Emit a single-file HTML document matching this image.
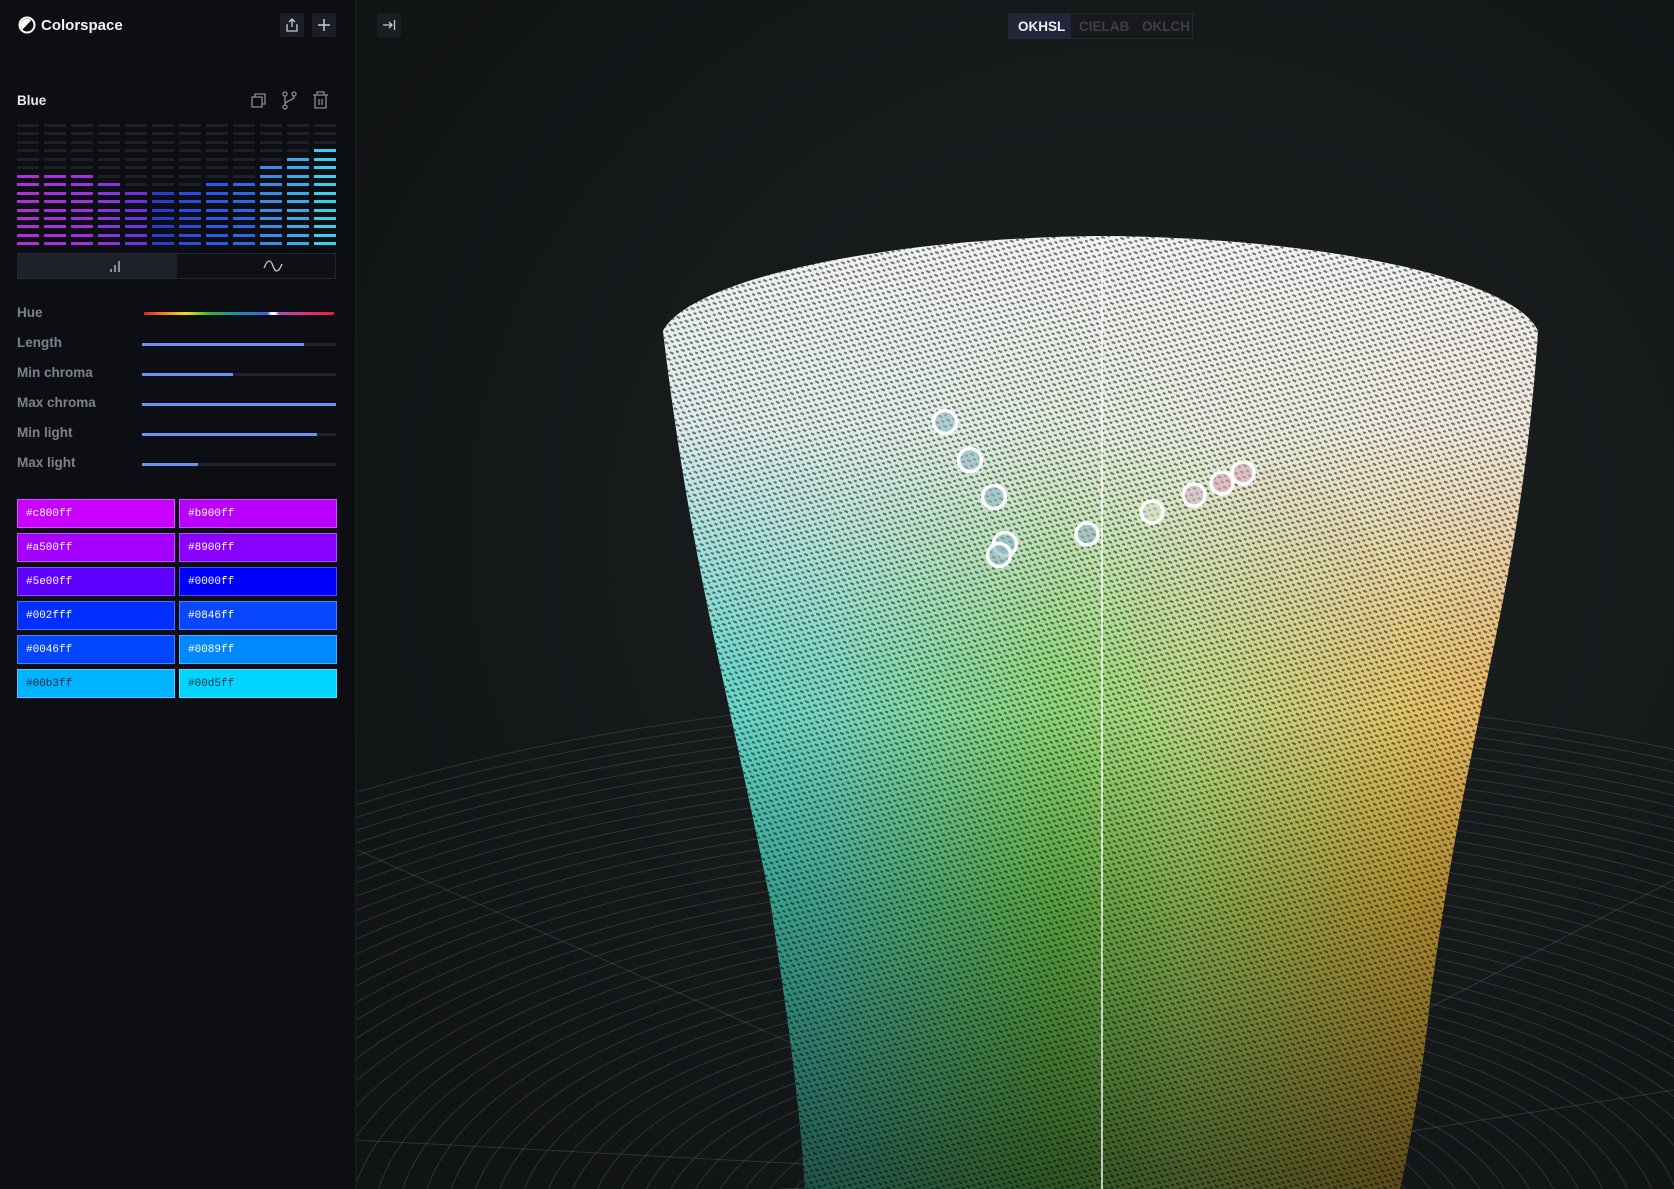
<!DOCTYPE html>
<html><head><meta charset="utf-8"><style>
*{box-sizing:border-box;margin:0;padding:0}
html,body{width:1674px;height:1189px;overflow:hidden}
body{background:#14181a;font-family:"Liberation Sans",sans-serif;position:relative}
#side{position:absolute;left:0;top:0;width:356px;height:1189px;background:#0c0e13;border-right:1px solid #1a1d22}
.btn{position:absolute;width:24px;height:24px;background:#1b1e26;border-radius:2px;color:#c8ccd4;display:flex;align-items:center;justify-content:center}
.lbl{position:absolute;left:17px;font-size:13.5px;color:#7d828c;font-weight:bold}
.track{position:absolute;left:142px;width:194px;height:3px;background:#1f222a}
.track i{position:absolute;left:0;top:0;height:3px;background:#6d8ff0}
.sw{position:absolute;width:158px;height:29px;border:1px solid rgba(255,255,255,.3);font-family:"Liberation Mono",monospace;font-size:11px;color:#fff;padding:8px 0 0 8px}
</style></head><body>
<svg width="1674" height="1189" style="position:absolute;left:0;top:0">
<defs>
<radialGradient id="bg" cx="0.6" cy="0.45" r="0.7"><stop offset="0" stop-color="#1c2122"/><stop offset="1" stop-color="#111415"/></radialGradient>
<linearGradient id="hz" x1="0" x2="1"><stop offset="0" stop-color="#2fd0c8"/><stop offset="0.2" stop-color="#55d0b0"/><stop offset="0.45" stop-color="#70d050"/><stop offset="0.6" stop-color="#a8d860"/><stop offset="0.85" stop-color="#e0b840"/><stop offset="1" stop-color="#e6a03a"/></linearGradient>
<linearGradient id="vt" x1="0" y1="0" x2="0" y2="1"><stop offset="0" stop-color="#f2f2f2" stop-opacity="1"/><stop offset="0.2" stop-color="#eeeeee" stop-opacity="0.9"/><stop offset="0.45" stop-color="#e8e8e8" stop-opacity="0.3"/><stop offset="0.7" stop-color="#ddd" stop-opacity="0"/></linearGradient>
<linearGradient id="dk" x1="0" y1="0" x2="0" y2="1"><stop offset="0.5" stop-color="#000" stop-opacity="0"/><stop offset="1" stop-color="#000" stop-opacity="0.6"/></linearGradient>
<pattern id="noise" width="9" height="7" patternUnits="userSpaceOnUse" patternTransform="rotate(25)">
<rect x="0" y="0" width="4" height="2" fill="#0b0d0e"/><rect x="5" y="3.5" width="3" height="2" fill="#0b0d0e"/>
</pattern>
<clipPath id="mc"><rect x="357" y="0" width="1317" height="1189"/></clipPath>
<path id="cyl" d="M663,331 C690,280 880,238 1102,236 C1330,238 1515,280 1538,331 C1520,600 1470,700 1430,1000 C1420,1100 1400,1189 1400,1189 L805,1189 C800,1100 785,1000 770,900 C730,700 690,560 663,331 Z"/>
</defs>
<rect x="357" y="0" width="1317" height="1189" fill="url(#bg)"/>
<g clip-path="url(#mc)" fill="none" stroke="#5a6062" stroke-opacity="0.4" stroke-width="1">
<g id="rings"></g>
<line x1="1100" y1="1180" x2="357" y2="1140"/><line x1="1100" y1="1180" x2="357" y2="850"/>
<line x1="1100" y1="1180" x2="1674" y2="880"/><line x1="1100" y1="1180" x2="1674" y2="1090"/>
<line x1="1100" y1="1180" x2="780" y2="1189"/>
</g>
<use href="#cyl" fill="url(#hz)"/>
<use href="#cyl" fill="url(#vt)"/>
<ellipse cx="1260" cy="620" rx="130" ry="150" fill="#e0a0a0" opacity="0.08"/>
<use href="#cyl" fill="url(#noise)" opacity="0.55"/>
<use href="#cyl" fill="url(#dk)"/>
<line x1="1102" y1="240" x2="1102" y2="1189" stroke="#fff" stroke-opacity="0.7" stroke-width="2"/>
<g fill="#8fb8c8" fill-opacity="0.6" stroke="#fff" stroke-width="3.5">
<circle cx="945" cy="422" r="11.5"/><circle cx="970" cy="460" r="11.5"/><circle cx="994" cy="497" r="11.5"/><circle cx="1005" cy="544" r="11.5"/><circle cx="999" cy="555" r="11.5"/>
<circle cx="1087" cy="534" r="11"/><circle cx="1152" cy="512" r="11" fill="#d8e0c8"/><circle cx="1194" cy="495" r="11" fill="#d8b8c8"/><circle cx="1222" cy="483" r="11" fill="#d8a8c0"/><circle cx="1243" cy="473" r="11" fill="#d8a8c0"/>
</g>
</svg>
<script>
var g=document.getElementById('rings'),s='';
for(var r=80;r<1300;r+=24){s+='<ellipse cx="1100" cy="1230" rx="'+r+'" ry="'+(r*0.42)+'"/>';}
g.innerHTML=s;
</script>
<div id="side"></div>
<div style="position:absolute;left:144px;top:312px;width:190px;height:3px;background:linear-gradient(90deg,#e02020,#f08020 10%,#f0e020 22%,#30b040 35%,#1890b0 50%,#4060e0 65%,#fff 67%,#fff 69%,#a050c0 71%,#e03080 85%,#e02030)"></div>
<svg width="18" height="18" style="position:absolute;left:18px;top:16px" viewBox="0 0 18 18"><circle cx="9" cy="9" r="7.5" fill="none" stroke="#fff" stroke-width="2"/><path d="M4.5 13.5 L13 4.5 A6 6 0 0 0 4.5 13.5Z" fill="#fff"/></svg>
<div style="position:absolute;left:41px;top:17px;font-size:15px;font-weight:bold;color:#f2f3f5">Colorspace</div>
<div class="btn" style="left:280px;top:13px"><svg width="14" height="14" viewBox="0 0 14 14" fill="none" stroke="#ccc" stroke-width="1.3"><path d="M7 1v8M4 4l3-3 3 3M3 7H2v6h10V7h-1"/></svg></div>
<div class="btn" style="left:312px;top:13px"><svg width="14" height="14" viewBox="0 0 14 14" stroke="#ccc" stroke-width="1.5"><path d="M7 1v12M1 7h12"/></svg></div>
<div class="btn" style="left:377px;top:13px;background:#1a1e22"><svg width="14" height="14" viewBox="0 0 14 14" fill="none" stroke="#ccc" stroke-width="1.3"><path d="M1 7h9M7 4l3 3-3 3M12.5 2v10"/></svg></div>
<div style="position:absolute;left:17px;top:93px;font-size:13.5px;font-weight:bold;color:#e8e9ec">Blue</div>
<svg width="100" height="24" style="position:absolute;left:248px;top:89px" fill="none" stroke="#888c94" stroke-width="1.3">
<rect x="4" y="8" width="10" height="10"/><path d="M7 8V5h10v10h-3"/>
<circle cx="37" cy="5" r="2"/><circle cx="37" cy="18" r="2"/><circle cx="46" cy="5" r="2"/><path d="M37 7v9M46 7c0 5-9 4-9 9"/>
<path d="M65 6h15M69 6V3h7v3M67 6v13h11V6M71 10v6M74 10v6"/>
</svg>
<div id="bars" style="position:absolute;left:17px;top:124px;width:320px;height:125px;overflow:hidden"></div>
<script>
var cols=[['#b030d8',9],['#a830dc',9],['#a030e0',9],['#8a34e0',8],['#6a34e0',7],['#2a3ad8',7],['#2a4ae0',7],['#2a5ae8',8],['#2a68e8',8],['#3a8ae8',10],['#38aaea',11],['#38d0ea',12]],h='';
for(var c=0;c<12;c++)for(var r=0;r<15;r++){var on=(14-r)<cols[c][1];h+='<div style="position:absolute;left:'+(c*27)+'px;top:'+(r*8.45)+'px;width:22px;height:3px;background:'+(on?cols[c][0]:'#1d2026')+'"></div>';}
document.getElementById('bars').innerHTML=h;
</script>
<div style="position:absolute;left:17px;top:253px;width:319px;height:26px;border:1px solid #23262e;background:#0e1015">
<div style="position:absolute;left:0;top:0;width:159px;height:24px;background:#1d2129"></div>
<svg width="14" height="14" style="position:absolute;left:90px;top:5px" stroke="#ccc" stroke-width="1.3"><path d="M3 13V10M7 13V6M11 13V2"/></svg>
<svg width="20" height="14" style="position:absolute;left:245px;top:5px" fill="none" stroke="#ccc" stroke-width="1.3"><path d="M1 9C5-1 8 1 10 7S15 15 19 5"/></svg>
</div>
<div class="lbl" style="top:305px">Hue</div>
<div class="lbl" style="top:335px">Length</div><div class="track" style="top:343px"><i style="width:162px"></i></div>
<div class="lbl" style="top:365px">Min chroma</div><div class="track" style="top:373px"><i style="width:91px"></i></div>
<div class="lbl" style="top:395px">Max chroma</div><div class="track" style="top:403px"><i style="width:194px"></i></div>
<div class="lbl" style="top:425px">Min light</div><div class="track" style="top:433px"><i style="width:175px"></i></div>
<div class="lbl" style="top:455px">Max light</div><div class="track" style="top:463px"><i style="width:56px"></i></div>
<div class="sw" style="left:17px;top:499px;background:#c800ff">#c800ff</div><div class="sw" style="left:179px;top:499px;background:#b900ff">#b900ff</div>
<div class="sw" style="left:17px;top:533px;background:#a500ff">#a500ff</div><div class="sw" style="left:179px;top:533px;background:#8900ff">#8900ff</div>
<div class="sw" style="left:17px;top:567px;background:#5e00ff">#5e00ff</div><div class="sw" style="left:179px;top:567px;background:#0000ff">#0000ff</div>
<div class="sw" style="left:17px;top:601px;background:#002fff">#002fff</div><div class="sw" style="left:179px;top:601px;background:#0846ff">#0846ff</div>
<div class="sw" style="left:17px;top:635px;background:#0046ff">#0046ff</div><div class="sw" style="left:179px;top:635px;background:#0089ff">#0089ff</div>
<div class="sw" style="left:17px;top:669px;background:#00b3ff;color:#0a2a40">#00b3ff</div><div class="sw" style="left:179px;top:669px;background:#00d5ff;color:#0a3040">#00d5ff</div>
<div style="position:absolute;left:1008px;top:13px;width:185px;height:26px;border:1px solid #24272c;background:#17191c;font-size:13.5px;font-weight:bold">
<div style="position:absolute;left:0;top:0;width:62px;height:24px;background:#22263a"></div>
<span style="position:absolute;left:9px;top:5px;color:#f0f0f4">OKHSL</span>
<span style="position:absolute;left:70px;top:5px;color:#3c3f46">CIELAB</span>
<span style="position:absolute;left:133px;top:5px;color:#3c3f46">OKLCH</span>
</div>
</body></html>
